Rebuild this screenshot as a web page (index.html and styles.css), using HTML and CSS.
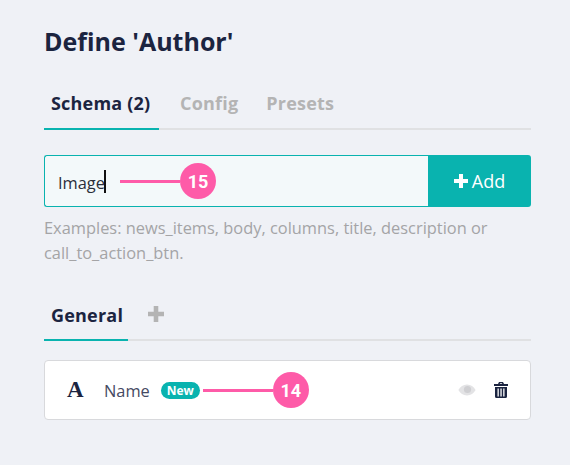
FILE: index.html
```html
<!DOCTYPE html>
<html lang="en">
<head>
<meta charset="utf-8">
<title>Define 'Author'</title>
<link rel="stylesheet" href="styles.css">
</head>
<body>
<main class="panel">
  <h1 class="title">Define 'Author'</h1>
  <nav class="tabs tabs-main">
    <span class="tab active">Schema (2)</span>
    <span class="tab">Config</span>
    <span class="tab">Presets</span>
  </nav>
  <div class="add-row">
    <div class="field"><span class="field-text">Image</span><span class="caret"></span></div>
    <button class="add-btn">
      <svg class="plus" viewBox="0 0 14 14" width="14" height="14"><path d="M5 0h4v5h5v4H9v5H5V9H0V5h5z" fill="#fff"/></svg>
      <span>Add</span>
    </button>
    <div class="callout callout-15"><span class="line line-15"></span><span class="dot">15</span></div>
  </div>
  <p class="help">Examples: news_items, body, columns, title, description or call_to_action_btn.</p>
  <nav class="tabs tabs-sub">
    <span class="tab active">General</span>
    <svg class="tab-plus" viewBox="1 1 14 14" width="16" height="16"><path d="M6 1h4v5h5v4h-5v5H6v-5H1V6h5z" fill="#b4b4b4"/></svg>
  </nav>
  <section class="card">
    <span class="type-icon">A</span>
    <span class="name">Name</span>
    <span class="badge">New</span>
    <span class="line line-14"></span>
    <span class="dot dot-14">14</span>
    <span class="actions">
      <svg class="eye" viewBox="0 0 18 12" width="18" height="12"><path d="M9 .5C5.2.5 2.2 2.8.4 6c1.8 3.200 4.800 5.500 8.600 5.500s6.800-2.300 8.600-5.500C15.800 2.800 12.800.5 9 .5z" fill="#e3e3e5"/><circle cx="9.500" cy="5.500" r="3.600" fill="#cfcfd2"/></svg>
      <svg class="trash" viewBox="0 0 14 16" width="14" height="16"><path fill="#1b2440" d="M5 0h4l1 2h4v2H0V2h4zM6 1.200 5.700 2h2.600L8 1.200zM1 5h12v9.500a1.500 1.500 0 0 1-1.500 1.500h-9A1.500 1.500 0 0 1 1 14.500zM3.500 6.500v8h1.300v-8zM6.400 6.500v8h1.300v-8zM9.200 6.500v8h1.300v-8z" fill-rule="evenodd"/></svg>
    </span>
  </section>
</main>
</body>
</html>
```
FILE: styles.css
```css
* { box-sizing: border-box; }
html, body { margin: 0; height: 100%; }
body {
  background: #eff1f6;
  font-family: "Open Sans", "Noto Sans", sans-serif;
  color: #1b2440;
  overflow: hidden;
}
.panel { width: 570px; padding: 25px 39px 0 44px; }
.title { margin: 0; font-size: 25px; line-height: 32px; font-weight: 700; color: #1b2440; }
.tabs { display: flex; border-bottom: 2px solid #e0e1e3; }
.tabs-main { margin-top: 15px; height: 58px; gap: 14px; }
.tab {
  font-size: 18px; line-height: 24px; font-weight: 700; color: #b4b4b4; letter-spacing: .2px;
  padding: 19px 7px 0;
}
.tab.active {
  color: #1b2440; height: 58px;
  border-bottom: 2px solid #09b3af;
}
.tabs-main .tab.active { width: 115px; }
.add-row { position: relative; display: flex; height: 52px; margin-top: 25px; }
.field {
  flex: 1; display: flex; align-items: center; padding: 0 13px;
  background: #f3f9fa; border: 1px solid #09b3af; border-right: 0;
  border-radius: 3px 0 0 3px;
}
.field-text { font-size: 16.4px; color: #2b2f3a; margin-top: 2px; }
.caret { width: 2px; height: 23px; background: #111; margin-left: -1px; }
.add-btn {
  width: 103px; display: flex; align-items: center; justify-content: center; gap: 4px;
  background: #09b3af; color: #fff; border: 0; border-radius: 0 3px 3px 0;
  font: 400 18px "Open Sans", sans-serif; padding: 0;
}
.callout { position: absolute; left: 76px; top: 8px; display: flex; align-items: center; }
.line { display: block; height: 3px; background: #fe5ba8; }
.line-15 { width: 60px; }
.dot {
  width: 36px; height: 36px; border-radius: 50%; background: #fe5ba8; color: #fff;
  display: flex; align-items: center; justify-content: center;
  font: 700 18px Roboto, sans-serif;
}
.help { margin: 8px 0 0; font-size: 16.4px; line-height: 25px; color: #a4a4a6; }
.tabs-sub { margin-top: 29px; height: 47px; gap: 20px; }
.tabs-sub .tab.active { height: 47px; width: 84px; padding: 9px 7px 0; }
.tab-plus { margin-top: 12px; }
.card {
  position: relative; display: flex; align-items: center; height: 60px; margin-top: 19px;
  padding: 0 22px 0 22px; background: #fff; border: 1px solid #d8d9dc; border-radius: 4px;
}
.type-icon { width: 37px; font: 700 23px "Liberation Serif", serif; color: #1b2440; }
.name { font-size: 16.4px; color: #454a63; }
.badge {
  margin-left: 11px; width: 39px; height: 17px; border-radius: 9px; background: #09b3af; color: #fff;
  display: flex; align-items: center; justify-content: center; font-size: 12px; font-weight: 700;
}
.line-14 { width: 70px; margin-left: 3px; }
.actions { margin-left: auto; display: flex; align-items: center; gap: 18px; }
```
